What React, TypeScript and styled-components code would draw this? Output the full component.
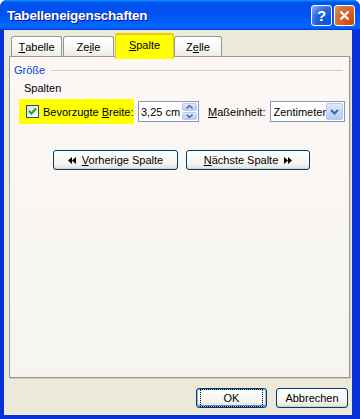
import React from "react";
import styled, { createGlobalStyle } from "styled-components";

const GlobalStyle = createGlobalStyle`
  html, body {
    margin: 0;
    padding: 0;
    background: #ffffff;
  }
  * {
    box-sizing: border-box;
  }
`;

const FONT = `"Liberation Sans", Arial, sans-serif`;

const Window = styled.div`
  width: 360px;
  height: 419px;
  display: flex;
  flex-direction: column;
  background: #0831d9;
  border-radius: 7px 7px 0 0;
  overflow: hidden;
  font-family: ${FONT};
  font-size: 11px;
  color: #000;
  white-space: nowrap;
`;

const TitleBar = styled.div`
  height: 30px;
  flex: none;
  display: flex;
  align-items: center;
  padding: 0 5px 0 7px;
  background: linear-gradient(
    180deg,
    #0997ff,
    #0053ee 8%,
    #0050ee 40%,
    #0066ff 88%,
    #0066ff 93%,
    #005bff 95%,
    #003dd7 96%,
    #003dd7
  );
`;

const Title = styled.div`
  flex: 1;
  color: #fff;
  font-weight: bold;
  font-size: 13.5px;
  letter-spacing: -0.2px;
  text-shadow: 1px 1px #0f1089;
`;

const TitleButton = styled.div<{ $close?: boolean }>`
  width: 21px;
  height: 21px;
  margin-left: 2px;
  border: 1px solid #fff;
  border-radius: 3px;
  display: flex;
  align-items: center;
  justify-content: center;
  color: #fff;
  font-weight: bold;
  font-size: 15px;
  background: ${(p) =>
    p.$close
      ? "radial-gradient(circle at 90% 90%, #cc4600 0%, #dc6527 55%, #cd7546 70%, #e5a01a 100%)"
      : "radial-gradient(circle at 90% 90%, #0054e9 0%, #2263d5 55%, #4479e4 70%, #a3bbec 100%)"};
`;

const Body = styled.div`
  flex: 1;
  margin: 0 8px 4px 4px;
  background: #ece9d8;
  display: flex;
  flex-direction: column;
  padding: 3px 3px 0 5px;
`;

const TabRow = styled.div`
  display: flex;
  align-items: flex-end;
  height: 23px;
  padding-left: 2px;
  position: relative;
  z-index: 1;
`;

const Tab = styled.div<{ $w: number; $active?: boolean }>`
  width: ${(p) => p.$w}px;
  height: ${(p) => (p.$active ? 26 : 20)}px;
  margin-bottom: ${(p) => (p.$active ? -3 : 0)}px;
  margin-right: ${(p) => (p.$active ? 0 : 1)}px;
  display: flex;
  align-items: center;
  justify-content: center;
  padding-bottom: ${(p) => (p.$active ? 4 : 0)}px;
  border: 1px solid #919b9c;
  border-bottom: none;
  border-radius: 3px 3px 0 0;
  background: ${(p) =>
    p.$active
      ? "#ffff00"
      : "linear-gradient(180deg, #ffffff 0%, #f7f7f4 60%, #ecebe5 100%)"};
  border-top: ${(p) => (p.$active ? "2px solid #f0a040" : "1px solid #919b9c")};
  border-color: ${(p) => (p.$active ? "#e8d000" : "#919b9c")};
`;

const Panel = styled.div`
  height: 322px;
  width: 341px;
  border: 1px solid #919b9c;
  background: linear-gradient(180deg, #fdf6f5 0%, #faf7f3 40%, #f5f4ee 100%);
  padding: 6px 4px 0 4px;
  display: flex;
  flex-direction: column;
  box-shadow: 1px 1px 0 #d0cdc0;
`;

const GroupHeader = styled.div`
  display: flex;
  align-items: center;
  gap: 6px;
  color: #0046d5;
  height: 14px;
`;

const GroupLine = styled.div`
  flex: 1;
  height: 1px;
  background: #d0d0bf;
  margin-right: 2px;
`;

const Label = styled.div`
  margin: 5px 0 0 10px;
  height: 14px;
`;

const FieldRow = styled.div`
  display: flex;
  align-items: center;
  margin-top: 3px;
  padding-left: 5px;
  height: 25px;
`;

const Highlight = styled.div`
  background: #ffff00;
  height: 25px;
  width: 115px;
  flex: none;
  display: flex;
  align-items: center;
  padding-left: 7px;
  gap: 4px;
`;

const CheckBox = styled.div`
  width: 13px;
  height: 13px;
  flex: none;
  border: 1px solid #1c5180;
  background: linear-gradient(135deg, #dcdcd7 0%, #fff 100%);
  display: flex;
  align-items: center;
  justify-content: center;
`;

const U = styled.span`
  text-decoration: underline;
`;

const SpinBox = styled.div`
  margin-left: 4px;
  width: 61px;
  height: 21px;
  flex: none;
  border: 1px solid #7f9db9;
  background: #fff;
  display: flex;
  align-items: center;
  padding: 1px;
`;

const FieldText = styled.div`
  flex: 1;
  min-width: 0;
  overflow: hidden;
  padding-left: 1px;
  font-size: 11px;
`;

const SpinButtons = styled.div`
  width: 15px;
  height: 17px;
  flex: none;
  display: flex;
  flex-direction: column;
  gap: 1px;
`;

const SpinPart = styled.div`
  flex: 1;
  background: linear-gradient(180deg, #dfe9fd, #b6cbf8);
  border: 1px solid #b7c9ef;
  border-radius: 2px;
  display: flex;
  align-items: center;
  justify-content: center;
`;

const UnitLabel = styled.div`
  margin-left: 9px;
`;

const Select = styled.div`
  margin-left: 5px;
  width: 75px;
  height: 21px;
  flex: none;
  border: 1px solid #7f9db9;
  background: #fff;
  display: flex;
  align-items: center;
  padding: 1px;
`;

const DropButton = styled.div`
  width: 17px;
  height: 17px;
  flex: none;
  border: 1px solid #b7c9ef;
  border-radius: 2px;
  background: linear-gradient(180deg, #dfe9fd, #b6cbf8);
  display: flex;
  align-items: center;
  justify-content: center;
`;

const NavRow = styled.div`
  display: flex;
  gap: 8px;
  margin-top: 26px;
  padding-left: 39px;
`;

const Button = styled.div<{ $w: number; $default?: boolean }>`
  width: ${(p) => p.$w}px;
  height: 20px;
  border: 1px solid #003c74;
  border-radius: 3px;
  background: linear-gradient(180deg, #ffffff 0%, #f4f4f0 70%, #e3e1d6 100%);
  display: flex;
  align-items: center;
  justify-content: center;
  gap: 5px;
  box-shadow: ${(p) =>
    p.$default
      ? "inset 0 0 0 1px #98b8ea, inset 0 -1px 0 1px #5b8ee0"
      : "inset 0 -1px 0 #d6d0c5"};
`;

const FocusText = styled.span`
  outline: 1px dotted #000;
  outline-offset: 2px;
  padding: 0 21px;
`;

const Footer = styled.div`
  display: flex;
  justify-content: flex-end;
  gap: 9px;
  padding: 10px 1px 0 0;
`;

const ArrowLeft = () => (
  <svg width="9" height="7" viewBox="0 0 9 7">
    <path d="M4 0 L0 3.5 L4 7 Z M8 0 L4 3.5 L8 7 Z" fill="#000" />
  </svg>
);

const ArrowRight = () => (
  <svg width="9" height="7" viewBox="0 0 9 7">
    <path d="M1 0 L5 3.5 L1 7 Z M5 0 L9 3.5 L5 7 Z" fill="#000" />
  </svg>
);

const tabs = [
  { w: 51, pre: "", key: "T", post: "abelle" },
  { w: 51, pre: "Ze", key: "i", post: "le" },
  { w: 59, pre: "", key: "S", post: "palte", active: true },
  { w: 48, pre: "Z", key: "e", post: "lle" },
];

export default function App() {
  return (
    <>
      <GlobalStyle />
      <Window>
        <TitleBar>
          <Title>Tabelleneigenschaften</Title>
          <TitleButton>?</TitleButton>
          <TitleButton $close>
            <svg width="11" height="11" viewBox="0 0 11 11">
              <path d="M1.5 1.5 L9.5 9.5 M9.5 1.5 L1.5 9.5" stroke="#fff" strokeWidth="2.2" />
            </svg>
          </TitleButton>
        </TitleBar>
        <Body>
          <TabRow>
            {tabs.map((t) => (
              <Tab key={t.key + t.post} $w={t.w} $active={t.active}>
                {t.pre}
                <U>{t.key}</U>
                {t.post}
              </Tab>
            ))}
          </TabRow>
          <Panel>
            <GroupHeader>
              Größe
              <GroupLine />
            </GroupHeader>
            <Label>Spalten</Label>
            <FieldRow>
              <Highlight>
                <CheckBox>
                  <svg width="9" height="9" viewBox="0 0 9 9">
                    <path d="M1 4 L3.5 6.5 L8 1.5" stroke="#21a121" strokeWidth="2" fill="none" />
                  </svg>
                </CheckBox>
                <span>
                  Bevorzugte <U>B</U>reite:
                </span>
              </Highlight>
              <SpinBox>
                <FieldText>3,25 cm</FieldText>
                <SpinButtons>
                  <SpinPart>
                    <svg width="7" height="4" viewBox="0 0 7 4">
                      <path d="M0.5 3.5 L3.5 0.5 L6.5 3.5" stroke="#4d6185" strokeWidth="1.4" fill="none" />
                    </svg>
                  </SpinPart>
                  <SpinPart>
                    <svg width="7" height="4" viewBox="0 0 7 4">
                      <path d="M0.5 0.5 L3.5 3.5 L6.5 0.5" stroke="#4d6185" strokeWidth="1.4" fill="none" />
                    </svg>
                  </SpinPart>
                </SpinButtons>
              </SpinBox>
              <UnitLabel>
                <U>M</U>aßeinheit:
              </UnitLabel>
              <Select>
                <FieldText>Zentimeter</FieldText>
                <DropButton>
                  <svg width="9" height="6" viewBox="0 0 9 6">
                    <path d="M1 1 L4.5 4.5 L8 1" stroke="#4d6185" strokeWidth="2" fill="none" />
                  </svg>
                </DropButton>
              </Select>
            </FieldRow>
            <NavRow>
              <Button $w={125}>
                <ArrowLeft />
                <span>
                  <U>V</U>orherige Spalte
                </span>
              </Button>
              <Button $w={124}>
                <span>
                  <U>N</U>ächste Spalte
                </span>
                <ArrowRight />
              </Button>
            </NavRow>
          </Panel>
          <Footer>
            <Button $w={71} $default>
              <FocusText>OK</FocusText>
            </Button>
            <Button $w={72}>Abbrechen</Button>
          </Footer>
        </Body>
      </Window>
    </>
  );
}
